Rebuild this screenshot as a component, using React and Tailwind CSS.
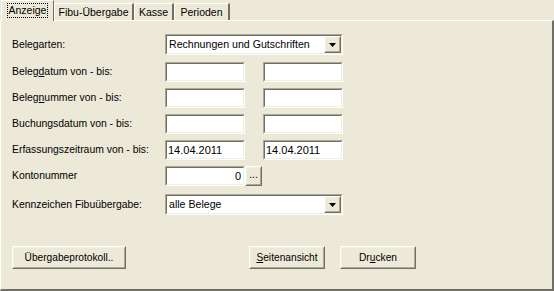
import React from "react";

function Sunken({ className = "", children }) {
  return (
    <div className={"border border-t-[#ACA899] border-l-[#ACA899] border-b-white border-r-white " + className}>
      <div className="h-full w-full border border-t-[#716F64] border-l-[#716F64] border-b-[#F1EFE2] border-r-[#F1EFE2] bg-white flex items-center">
        {children}
      </div>
    </div>
  );
}

function Raised({ className = "", children }) {
  return (
    <div className={"border border-t-white border-l-white border-b-[#716F64] border-r-[#716F64] bg-[#ECE9D8] " + className}>
      <div className="h-full w-full border border-t-[#F1EFE2] border-l-[#F1EFE2] border-b-[#ACA899] border-r-[#ACA899] flex items-center justify-center">
        {children}
      </div>
    </div>
  );
}

function Arrow() {
  return (
    <svg width="7" height="4" viewBox="0 0 7 4">
      <polygon points="0,0 7,0 3.5,4" fill="black" />
    </svg>
  );
}

function Select({ text }) {
  return (
    <Sunken className="w-[178px] h-[21px]">
      <span className="pl-[2px] flex-1 leading-none text-[10.6px]">{text}</span>
      <Raised className="w-[17px] h-[17px]">
        <Arrow />
      </Raised>
    </Sunken>
  );
}

function Row({ label, mt, children }) {
  return (
    <div className={"flex items-center " + mt}>
      <div className="w-[153px] text-[10.4px]">{label}</div>
      {children}
    </div>
  );
}

function Pair({ a = "", b = "" }) {
  return (
    <div className="flex gap-[18px]">
      <Sunken className="w-[80px] h-[20px]">
        <span className="pl-[1px] leading-none">{a}</span>
      </Sunken>
      <Sunken className="w-[80px] h-[20px]">
        <span className="pl-[1px] leading-none">{b}</span>
      </Sunken>
    </div>
  );
}

function Tab({ children, selected, w }) {
  if (selected) {
    return (
      <div className={"h-[21px] border-l border-t border-white border-r border-r-[#716F64] bg-[#ECE9D8] relative z-10 flex items-start justify-center pt-[2px] " + w}>
        <span className="border border-dotted border-black px-[1px] leading-[13px]">{children}</span>
      </div>
    );
  }
  return (
    <div className={"h-[18px] mt-[3px] border-l border-t border-white border-r-2 border-r-[#716F64] bg-[#ECE9D8] flex items-start justify-center pt-[2px] " + w}>
      <span className="leading-[13px]">{children}</span>
    </div>
  );
}

export default function App() {
  return (
    <div
      className="w-[554px] h-[291px] bg-[#ECE9D8] text-black text-[11px] flex flex-col overflow-hidden"
      style={{ fontFamily: '"Liberation Sans", Arial, sans-serif' }}
    >
      <div className="flex h-[21px] pl-[1px] items-start text-[10.5px]">
        <Tab selected w="w-[53px]">Anzeige</Tab>
        <Tab w="w-[80px]">Fibu-Übergabe</Tab>
        <Tab w="w-[40px]">Kasse</Tab>
        <Tab w="w-[56px]">Perioden</Tab>
      </div>
      <div className="flex-1 -mt-[1px] border-l border-t border-white border-r-2 border-b-2 border-r-[#716F64] border-b-[#716F64] pl-[11px] pt-[13px] flex flex-col">
        <Row label="Belegarten:" mt="">
          <Select text="Rechnungen und Gutschriften" />
        </Row>
        <Row label={<>Beleg<u>d</u>atum von - bis:</>} mt="mt-[7px]">
          <Pair />
        </Row>
        <Row label={<>Beleg<u>n</u>ummer von - bis:</>} mt="mt-[6px]">
          <Pair />
        </Row>
        <Row label="Buchungsdatum von - bis:" mt="mt-[6px]">
          <Pair />
        </Row>
        <Row label="Erfassungszeitraum von - bis:" mt="mt-[6px]">
          <Pair a="14.04.2011" b="14.04.2011" />
        </Row>
        <Row label="Kontonummer" mt="mt-[6px]">
          <Sunken className="w-[80px] h-[20px]">
            <span className="flex-1 text-right pr-[2px] leading-none">0</span>
          </Sunken>
          <Raised className="w-[17px] h-[20px]">
            <span className="leading-none pb-[2px] text-[10px]">...</span>
          </Raised>
        </Row>
        <Row label="Kennzeichen Fibuübergabe:" mt="mt-[8px]">
          <Select text="alle Belege" />
        </Row>
        <div className="flex mt-[31px] text-[10.2px]">
          <Raised className="w-[114px] h-[23px]">Übergabeprotokoll..</Raised>
          <Raised className="w-[76px] h-[23px] ml-[123px]">
            <span><u>S</u>eitenansicht</span>
          </Raised>
          <Raised className="w-[76px] h-[23px] ml-[15px]">
            <span>Dr<u>u</u>cken</span>
          </Raised>
        </div>
      </div>
    </div>
  );
}
